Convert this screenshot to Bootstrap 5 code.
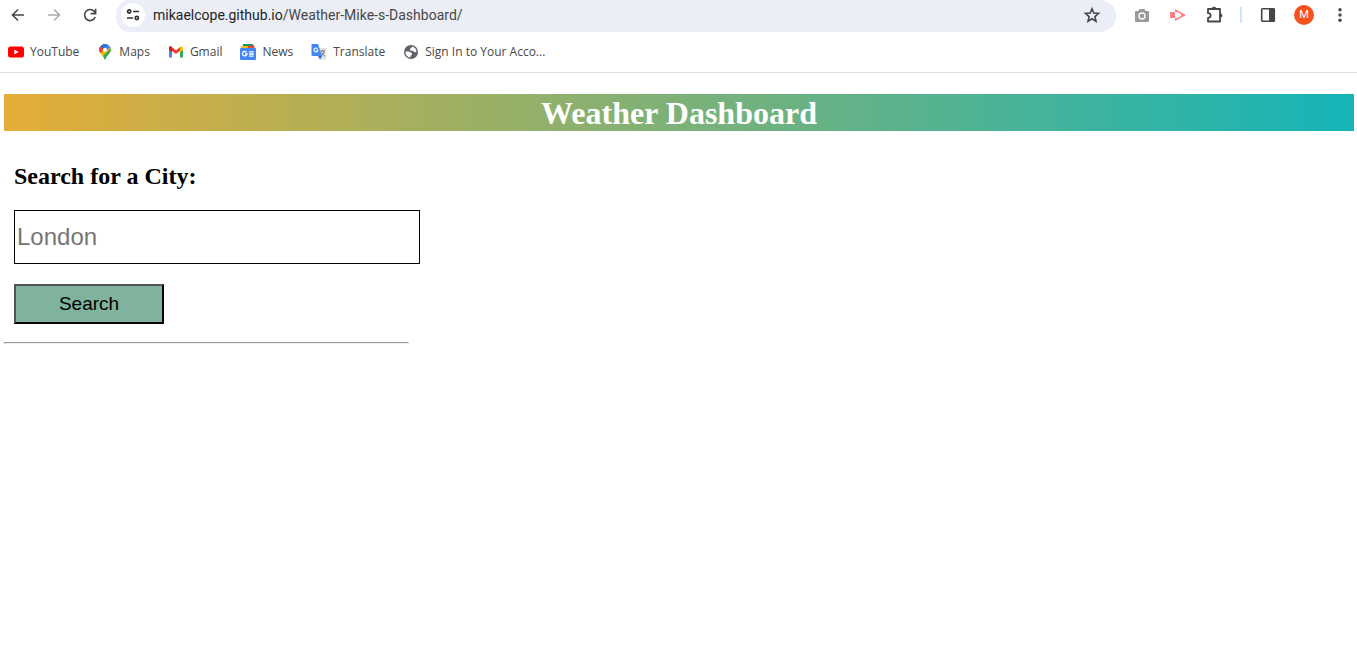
<!DOCTYPE html>
<html lang="en">
<head>
<meta charset="utf-8">
<meta name="viewport" content="width=device-width, initial-scale=1">
<title>Weather Dashboard</title>
<link rel="stylesheet" href="https://cdn.jsdelivr.net/npm/bootstrap@5.3.0/dist/css/bootstrap.min.css">
<style>
  body { background: #fff; color: #000; font-family: "Liberation Serif", "Times New Roman", serif; }
  .browser { font-family: "Open Sans", "Noto Sans", sans-serif; color: #474747; border-bottom: 1px solid #e0e0e0; height: 73px; overflow: hidden; }
  .toolbar { height: 32px; margin-right: -1px; }
  .tool { width: 36px; height: 30px; padding: 0; border: 0; background: none; color: #474747; display: flex; align-items: center; justify-content: center; flex: none; }
  .tool svg { display: block; }
  .tool:disabled { color: #adadad; }
  .divider { width: 2px; height: 16px; background: #d3e3fd; margin: 0 8px; }
  .omnibox { background: #ebeef7; height: 32px; border-radius: 14px 16px 16px 14px; padding-left: 5px; padding-right: 6px; }
  .site-info { width: 24px; height: 24px; border-radius: 50%; background: #fff; color: #333; margin: 3px 8px 0 0; }
  .address { height: 30px; font-family: Roboto, "Open Sans", sans-serif; font-size: 14px; color: #474747; min-width: 0; }
  .address b { font-weight: 400; color: #1f1f1f; }
  .avatar { width: 20px; height: 20px; border-radius: 50%; background: #f4511e; color: #fff; font-family: Roboto, sans-serif; font-size: 11px; line-height: 20px; }
  .bookmarks { height: 40px; padding-left: 8px; gap: 18px; font-size: 12px; line-height: 20px; }
  .bookmarks a { color: #474747; gap: 6px; }
  .bookmarks svg { width: 16px; height: 16px; flex: none; }
  main { padding: 21px 3px 0 4px; }
  .banner { margin: 0; padding-top: 1px; background: linear-gradient(90deg, #e4ad38, #15b5b8); color: #fff; font-size: 32px; font-weight: 700; line-height: 36px; }
  .search-panel { width: 30%; min-width: 300px; }
  .search-form { padding: 32px 0 0 10px; }
  .search-title { font-size: 24px; line-height: 27px; font-weight: 700; margin-bottom: 20px; }
  .city { width: 406px; max-width: 96vw; height: 54px; border: 1px solid #000; padding: 1px 2px; font: 24px "Liberation Sans", Arial, sans-serif; border-radius: 0; }
  .city::placeholder { color: #757575; opacity: 1; }
  .go { width: 150px; height: 40px; margin-top: 20px; background: #7fb39d; border: 2px outset #000; color: #000; font: 19px "Liberation Sans", Arial, sans-serif; padding: 0; }
  .rule { border: 1px solid; border-color: #9a9a9a #eee #eee #9a9a9a; opacity: 1; margin: 18px 0 0; }
</style>
</head>
<body>
<header class="browser">
  <div class="toolbar d-flex align-items-start">
    <button class="tool" aria-label="Back"><svg width="20" height="20" viewBox="0 0 20 20" fill="none" stroke="currentColor" stroke-width="1.600"><path d="M16 10H5M10 4.500 4.500 10l5.500 5.500"/></svg></button>
    <button class="tool" aria-label="Forward" disabled><svg width="20" height="20" viewBox="0 0 20 20" fill="none" stroke="currentColor" stroke-width="1.600"><path d="M4 10H15M10 4.500 15.500 10 10 15.500"/></svg></button>
    <button class="tool" aria-label="Reload"><svg width="20" height="20" viewBox="0 0 20 20" fill="none" stroke="currentColor" stroke-width="1.700"><path d="M15.200 12A5.500 5.500 0 1 1 14.300 6.500l1 1.400"/><path d="M15.600 3.700v5h-5"/></svg></button>
    <div class="omnibox d-flex align-items-start flex-grow-1 ms-2 me-2">
      <button class="tool site-info" aria-label="View site information"><svg width="16" height="16" viewBox="0 0 16 16" fill="none" stroke="currentColor" stroke-width="1.700"><circle cx="4.200" cy="4.500" r="1.600"/><path d="M8 4.500h6M2 11h6"/><circle cx="11.800" cy="11" r="1.600"/></svg></button>
      <div class="address flex-grow-1 d-flex align-items-center" role="textbox" aria-label="Address"><span class="text-truncate"><b>mikaelcope.github.io</b>/Weather-Mike-s-Dashboard/</span></div>
      <button class="tool" aria-label="Bookmark this page"><svg width="18" height="18" viewBox="0 0 18 18" fill="none" stroke="currentColor" stroke-width="1.600"><path d="m9 2.800 1.800 4.300 4.700.4-3.600 3.100 1.100 4.600L9 12.700l-4 2.500 1.100-4.600-3.600-3.100 4.700-.4z"/></svg></button>
    </div>
    <button class="tool" aria-label="Screenshot"><svg width="16" height="16" viewBox="0 0 16 16"><path d="M2 4h2.500L5.500 2h5l1 2H14q1 0 1 1v9q0 1-1 1H2q-1 0-1-1V5q0-1 1-1z" fill="#999"/><circle cx="8" cy="9" r="3.700" fill="#fff"/><circle cx="8" cy="9" r="2.300" fill="#999"/></svg></button>
    <button class="tool" aria-label="Screen recorder"><svg width="16" height="16" viewBox="0 0 16 16" fill="#ff7f82"><path d="M0 5h5v6H0z"/><path fill-rule="evenodd" d="M5 2l11 6-11 6v-3h2.500L11 9V7L7.500 5H5z"/></svg></button>
    <button class="tool" aria-label="Extensions"><svg width="20" height="20" viewBox="0 0 20 20" fill="none" stroke="currentColor" stroke-width="1.800" stroke-linejoin="round"><path d="M4 4h12v12.500H4v-3.700c1.800 0 2.600-.8 2.600-2.300S5.800 8.200 4 8.200z"/><path d="M8 4a2 2 0 0 1 4 0zM16 8.500a2 2 0 0 1 0 4z" fill="currentColor"  stroke="currentColor" stroke-width=".8"/></svg></button>
    <div class="tool w-auto"><span class="divider"></span></div>
    <button class="tool" aria-label="Side panel"><svg width="16" height="16" viewBox="0 0 16 16"><rect x="1.700" y="1.700" width="12.600" height="12.600" rx=".8" fill="none" stroke="currentColor" stroke-width="1.600"/><path d="M9 1.500h5.500v13H9z" fill="currentColor"/></svg></button>
    <button class="tool" aria-label="Profile"><span class="avatar">M</span></button>
    <button class="tool" aria-label="Menu"><svg width="16" height="16" viewBox="0 0 16 16" fill="currentColor"><circle cx="8" cy="2.800" r="1.700"/><circle cx="8" cy="8" r="1.700"/><circle cx="8" cy="13.200" r="1.700"/></svg></button>
  </div>
  <nav class="bookmarks d-flex align-items-center" aria-label="Bookmarks">
    <a href="#" class="d-flex align-items-center text-decoration-none text-nowrap"><svg viewBox="0 0 16 16"><rect y="2.500" width="16" height="11" rx="2.500" fill="#f00"/><path d="M6.300 5.600v4.800L10.700 8z" fill="#fff"/></svg>YouTube</a>
    <a href="#" class="d-flex align-items-center text-decoration-none text-nowrap"><svg viewBox="0 0 16 16"><clipPath id="pin"><path d="M8 0a5.700 5.700 0 0 1 5.700 5.700C13.700 9.500 9.500 11 8 16 6.500 11 2.300 9.500 2.300 5.700A5.700 5.700 0 0 1 8 0z"/></clipPath><g clip-path="url(#pin)"><path d="M0 0h16v16H0z" fill="#34a853"/><path d="M0 0h16v2L5 12 0 9z" fill="#fbbc04"/><path d="M16 0v3L10 8 7 3 10 0z" fill="#4285f4"/><path d="M0 0h11L5 7 2 8z" fill="#1a73e8"/><path d="M1 2l2 0 4 3-3 4-3-2z" fill="#ea4335"/><path d="M14 3v3L6 13 4 10 10 6z" fill="#fbbc04"/><path d="M14 4v12H7l-1-4z" fill="#34a853"/></g><circle cx="8" cy="5.700" r="2" fill="#fff"/></svg>Maps</a>
    <a href="#" class="d-flex align-items-center text-decoration-none text-nowrap"><svg viewBox="0 0 16 16"><path d="M1 4v9.500h3V6z" fill="#4285f4"/><path d="M15 4v9.500h-3V6z" fill="#34a853"/><path d="M1 4c0-1.800 1.500-2 2.500-1.200L8 6.200l4.500-3.400L13 6l-5 4-7-5z" fill="#ea4335"/><path d="M1 4v2l3 2.200V3.200C2.500 2 1 2.500 1 4z" fill="#c5221f"/><path d="M15 4v2l-3 2.200v-5c1.500-1.200 3-.7 3 .8z" fill="#fbbc04"/></svg>Gmail</a>
    <a href="#" class="d-flex align-items-center text-decoration-none text-nowrap"><svg viewBox="0 0 16 16"><path d="m3 0h10v6H3z" fill="#0c9d58"/><path d="m8 2 6-1 1 5H8z" fill="#ea4335"/><path d="m1 2 7 0 0 3-7 1z" fill="#fbbc04"/><rect y="4" width="16" height="12" rx="1" fill="#4285f4"/><path d="M6.600 8.300A2.300 2.300 0 1 0 7 10H5M9 7.800h4.500M9 10h5M9 12.200h4.500" fill="none" stroke="#fff" stroke-width="1.300"/></svg>News</a>
    <a href="#" class="d-flex align-items-center text-decoration-none text-nowrap"><svg viewBox="0 0 16 16"><path d="M6 4h9v11.500H9z" fill="#e0e0e0"/><path d="M1 0h6l4 12H2q-1.500 0-1.500-1.500V1.500Q.5 0 1 0z" fill="#4285f4"/><path d="M7 12h4l-2 3.500z" fill="#3367d6"/><path d="M6.500 4.700A2 2 0 1 0 7 6.300H5" fill="none" stroke="#fff" stroke-width="1.100"/><path d="M9.500 7H14M11.700 6v1M13 7.500c-.5 2-1.500 3.500-3 4.500M10.500 8.500l3.500 4" fill="none" stroke="#757575"/></svg>Translate</a>
    <a href="#" class="d-flex align-items-center text-decoration-none text-nowrap"><svg viewBox="0 0 16 16"><circle cx="8" cy="8" r="7" fill="#5f6368"/><path d="M2.500 7.500h3c2 0 1.800 1.500 3.500 1.500v1.500c0 .8-1.500.8-1.500 1.600v1.300C4.500 13.400 2.500 11 2.500 7.500zM9 2.600c2.600.5 4.400 2.500 4.500 5.200-1 .8-2.200.7-2.800-.3C10 6.400 7 7.500 7 5.500 7 4 9 4.500 9 2.600z" fill="#fff"/></svg>Sign In to Your Acco...</a>
  </nav>
</header>
<main>
  <h1 class="banner text-center">Weather Dashboard</h1>
  <aside class="search-panel">
    <form class="search-form">
      <label class="search-title d-block" for="city">Search for a City:</label>
      <input class="city d-block" id="city" type="text" placeholder="London">
      <button class="go d-block" type="button">Search</button>
    </form>
    <hr class="rule">
  </aside>
</main>
<script src="https://cdn.jsdelivr.net/npm/bootstrap@5.3.0/dist/js/bootstrap.bundle.min.js"></script>
</body>
</html>
